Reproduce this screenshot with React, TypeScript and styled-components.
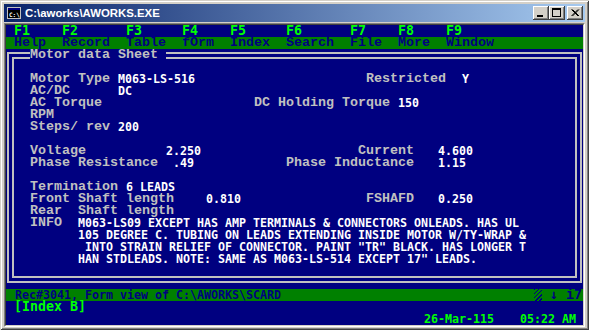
import React from "react";
import styled, { createGlobalStyle } from "styled-components";

const VGA = `"Liberation Mono", "DejaVu Sans Mono", monospace`;
const BLOCK = `"DejaVu Sans Mono", "Liberation Mono", monospace`;

const GlobalStyle = createGlobalStyle`
  html, body {
    margin: 0;
    padding: 0;
    background: #d4d0c8;
  }
`;

const Window = styled.div`
  width: 589px;
  height: 330px;
  box-sizing: border-box;
  padding: 4px;
  background: #d4d0c8;
  box-shadow: inset 1px 1px 0 #d4d0c8, inset -1px -1px 0 #404040,
    inset 2px 2px 0 #ffffff, inset -2px -2px 0 #808080;
  display: flex;
  flex-direction: column;
`;

const TitleBar = styled.div`
  flex: none;
  height: 18px;
  margin-bottom: 1px;
  padding: 0 2px;
  display: flex;
  align-items: center;
  background: linear-gradient(to right, #0a246a, #a6caf0);
`;

const Caption = styled.span`
  margin-left: 3px;
  color: #ffffff;
  font: bold 11.4px "Liberation Sans", Arial, sans-serif;
  white-space: nowrap;
`;

const Controls = styled.div`
  margin-left: auto;
  display: flex;
`;

const CtrlButton = styled.button<{ $gap?: number }>`
  width: 16px;
  height: 14px;
  padding: 0;
  border: 0;
  margin-left: ${(p) => p.$gap ?? 0}px;
  background: #d4d0c8;
  box-shadow: inset -1px -1px 0 #404040, inset 1px 1px 0 #ffffff,
    inset -2px -2px 0 #808080, inset 2px 2px 0 #d4d0c8;
  display: block;
  svg {
    display: block;
  }
`;

const ClientEdge = styled.div`
  flex: 1;
  display: flex;
  border: 1px solid;
  border-color: #808080 #ffffff #ffffff #808080;
`;

const Screen = styled.div`
  flex: 1;
  display: flex;
  flex-direction: column;
  overflow: hidden;
  background: #000080;
  border: 1px solid;
  border-color: #404040 #d4d0c8 #d4d0c8 #404040;
`;

const MenuBar = styled.nav`
  flex: none;
  display: flex;
  padding-left: 8px;
  background: linear-gradient(to bottom, #000080 12px, #008000 12px);
`;

const MenuItem = styled.div<{ $w: number }>`
  flex: none;
  width: ${(p) => p.$w}px;
  display: flex;
  flex-direction: column;
`;

const FKey = styled.span`
  height: 12px;
  font: bold 13.29px/12px ${BLOCK};
  color: #00ff00;
  white-space: pre;
`;

const MenuLabel = styled.span`
  height: 12px;
  font: bold 13.33px/12px ${VGA};
  color: #000080;
  white-space: pre;
`;

const FormBox = styled.section`
  position: relative;
  flex: none;
  box-sizing: border-box;
  width: 575px;
  height: 231px;
  margin: 3px 0 0 1px;
  border: 7px double #c0c0c0;
  padding: 14px 0 0 16px;
`;

const BoxTitle = styled.h1`
  position: absolute;
  top: -10px;
  left: 16px;
  margin: 0;
  padding-right: 8px;
  background: #000080;
  font: bold 13.33px/12px ${VGA};
  color: #c0c0c0;
  white-space: pre;
`;

const Row = styled.div`
  display: flex;
  height: 12px;
`;

const Label = styled.span<{ $w?: number }>`
  flex: none;
  width: ${(p) => (p.$w ? `${p.$w}px` : "auto")};
  font: bold 13.33px/12px ${VGA};
  color: #c0c0c0;
  white-space: pre;
`;

const Value = styled.span<{ $w?: number }>`
  flex: none;
  width: ${(p) => (p.$w ? `${p.$w}px` : "auto")};
  font: bold 11.63px/12px ${BLOCK};
  color: #ffffff;
  white-space: pre;
`;

const InfoLines = styled.div`
  display: flex;
  flex-direction: column;
`;

const StatusBar = styled.div`
  flex: none;
  height: 12px;
  margin-top: 6px;
  padding: 0 1px 0 9px;
  display: flex;
  background: #008000;
`;

const StatusText = styled.span`
  font: bold 11.63px/12px ${BLOCK};
  color: #000080;
  white-space: pre;
`;

const Hatch = styled.span`
  flex: none;
  width: 8px;
  height: 12px;
  margin-left: auto;
  background: repeating-linear-gradient(
    135deg,
    #000080 0 1px,
    #008000 1px 3px
  );
`;

const StatusFlags = styled.span`
  font: bold 13.29px/12px ${BLOCK};
  color: #000080;
  white-space: pre;
`;

const IndexLine = styled.div`
  flex: none;
  height: 12px;
  padding-left: 8px;
  font: bold 13.29px/12px ${BLOCK};
  color: #00ff00;
  white-space: pre;
`;

const ClockLine = styled.div`
  flex: none;
  height: 12px;
  display: flex;
  justify-content: flex-end;
  gap: 26px;
  padding-right: 7px;
  font: bold 11.63px/12px ${BLOCK};
  color: #00ff00;
  white-space: pre;
`;

const menu = [
  { key: "F1", label: "Help", w: 48 },
  { key: "F2", label: "Record", w: 64 },
  { key: "F3", label: "Table", w: 56 },
  { key: "F4", label: "fOrm", w: 48 },
  { key: "F5", label: "Index", w: 56 },
  { key: "F6", label: "Search", w: 64 },
  { key: "F7", label: "File", w: 48 },
  { key: "F8", label: "More", w: 48 },
  { key: "F9", label: "Window", w: 64 },
];

const info = [
  "M063-LS09 EXCEPT HAS AMP TERMINALS & CONNECTORS ONLEADS. HAS UL",
  "105 DEGREE C. TUBING ON LEADS EXTENDING INSIDE MOTOR W/TY-WRAP &",
  ' INTO STRAIN RELIEF OF CONNECTOR. PAINT "TR" BLACK. HAS LONGER T',
  'HAN STDLEADS. NOTE: SAME AS M063-LS-514 EXCEPT 17" LEADS.',
];

const ConsoleIcon = () => (
  <svg width="16" height="16" viewBox="0 0 16 16" shapeRendering="crispEdges">
    <rect x="1" y="2" width="14" height="12" fill="#c0c0c0" />
    <rect x="2" y="3" width="12" height="2" fill="#000080" />
    <rect x="2" y="5" width="12" height="8" fill="#000000" />
    <text x="3" y="11.5" fontSize="6" fontFamily="DejaVu Sans Mono, monospace" fontWeight="bold" fill="#ffffff">
      C:\
    </text>
  </svg>
);

const App: React.FC = () => {
  return (
    <>
      <GlobalStyle />
      <Window>
        <TitleBar>
          <ConsoleIcon />
          <Caption>C:\aworks\AWORKS.EXE</Caption>
          <Controls>
            <CtrlButton aria-label="minimize">
              <svg width="16" height="14" shapeRendering="crispEdges">
                <rect x="4" y="9" width="6" height="2" fill="#000" />
              </svg>
            </CtrlButton>
            <CtrlButton aria-label="maximize">
              <svg width="16" height="14" shapeRendering="crispEdges">
                <rect x="3.5" y="2.5" width="8" height="8" fill="none" stroke="#000" />
                <rect x="3" y="3" width="9" height="1" fill="#000" />
              </svg>
            </CtrlButton>
            <CtrlButton aria-label="close" $gap={2}>
              <svg width="16" height="14">
                <path d="M4.5 3.5 L11 10 M5.5 3.5 L12 10 M11 3.5 L4.5 10 M12 3.5 L5.5 10" stroke="#000" strokeWidth="1" />
              </svg>
            </CtrlButton>
          </Controls>
        </TitleBar>

        <ClientEdge>
          <Screen>
            <MenuBar>
              {menu.map((m) => (
                <MenuItem key={m.key} $w={m.w}>
                  <FKey>{m.key}</FKey>
                  <MenuLabel>{m.label}</MenuLabel>
                </MenuItem>
              ))}
            </MenuBar>

            <FormBox>
              <BoxTitle>Motor data Sheet</BoxTitle>
              <Row>
                <Label $w={88}>Motor Type</Label>
                <Value $w={248}>M063-LS-516</Value>
                <Label $w={96}>Restricted</Label>
                <Value>Y</Value>
              </Row>
              <Row>
                <Label $w={88}>AC/DC</Label>
                <Value>DC</Value>
              </Row>
              <Row>
                <Label $w={224}>AC Torque</Label>
                <Label $w={144}>DC Holding Torque</Label>
                <Value>150</Value>
              </Row>
              <Row>
                <Label>RPM</Label>
              </Row>
              <Row>
                <Label $w={88}>Steps/ rev</Label>
                <Value>200</Value>
              </Row>
              <Row />
              <Row>
                <Label $w={136}>Voltage</Label>
                <Value $w={192}>2.250</Value>
                <Label $w={80}>Current</Label>
                <Value>4.600</Value>
              </Row>
              <Row>
                <Label $w={143}>Phase Resistance</Label>
                <Value $w={113}>.49</Value>
                <Label $w={152}>Phase Inductance</Label>
                <Value>1.15</Value>
              </Row>
              <Row />
              <Row>
                <Label $w={96}>Termination</Label>
                <Value>6 LEADS</Value>
              </Row>
              <Row>
                <Label $w={176}>Front Shaft length</Label>
                <Value $w={160}>0.810</Value>
                <Label $w={72}>FSHAFD</Label>
                <Value>0.250</Value>
              </Row>
              <Row>
                <Label>Rear  Shaft length</Label>
              </Row>
              <Row>
                <Label $w={48}>INFO</Label>
                <InfoLines>
                  {info.map((line, i) => (
                    <Value key={i}>{line}</Value>
                  ))}
                </InfoLines>
              </Row>
            </FormBox>

            <StatusBar>
              <StatusText>Rec#3041, Form view of C:\AWORKS\SCARD</StatusText>
              <Hatch />
              <StatusFlags>{" ↓ i7"}</StatusFlags>
            </StatusBar>
            <IndexLine>[Index B]</IndexLine>
            <ClockLine>
              <span>26-Mar-115</span>
              <span>05:22 AM</span>
            </ClockLine>
          </Screen>
        </ClientEdge>
      </Window>
    </>
  );
};

export default App;
